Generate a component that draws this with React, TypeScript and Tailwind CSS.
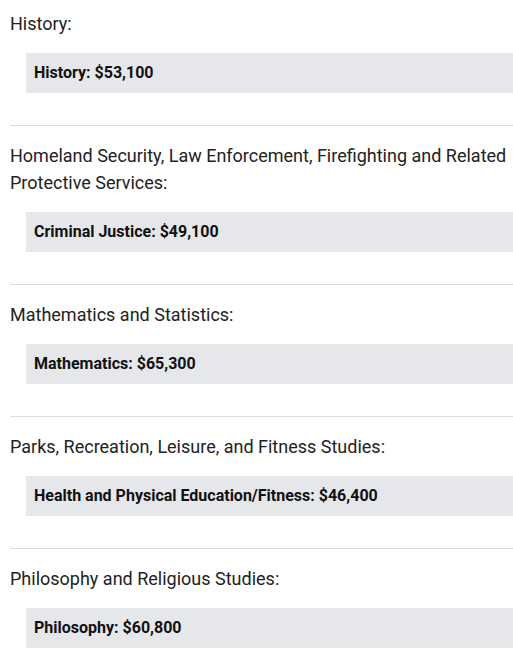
const sections = [
  { heading: "History:", items: ["History: $53,100"] },
  {
    heading: "Homeland Security, Law Enforcement, Firefighting and Related Protective Services:",
    items: ["Criminal Justice: $49,100"],
  },
  { heading: "Mathematics and Statistics:", items: ["Mathematics: $65,300"] },
  {
    heading: "Parks, Recreation, Leisure, and Fitness Studies:",
    items: ["Health and Physical Education/Fitness: $46,400"],
  },
  { heading: "Philosophy and Religious Studies:", items: ["Philosophy: $60,800"] },
];

export default function App() {
  return (
    <div className="w-[513px] min-h-[654px] bg-white pl-[10px] font-['Roboto',sans-serif] text-[#222]">
      {sections.map((s, i) => (
        <div key={i} className={i === 0 ? "pt-[10px]" : "border-t border-[#d9dce1] pt-4"}>
          <p className="text-[18px] leading-[27px]">{s.heading}</p>
          <div className="pl-4 pt-4 pb-8">
            {s.items.map((item) => (
              <div key={item} className="h-10 flex items-center bg-[#e5e7eb] px-2 text-[16px] font-bold text-[#111]">
                {item}
              </div>
            ))}
          </div>
        </div>
      ))}
    </div>
  );
}
